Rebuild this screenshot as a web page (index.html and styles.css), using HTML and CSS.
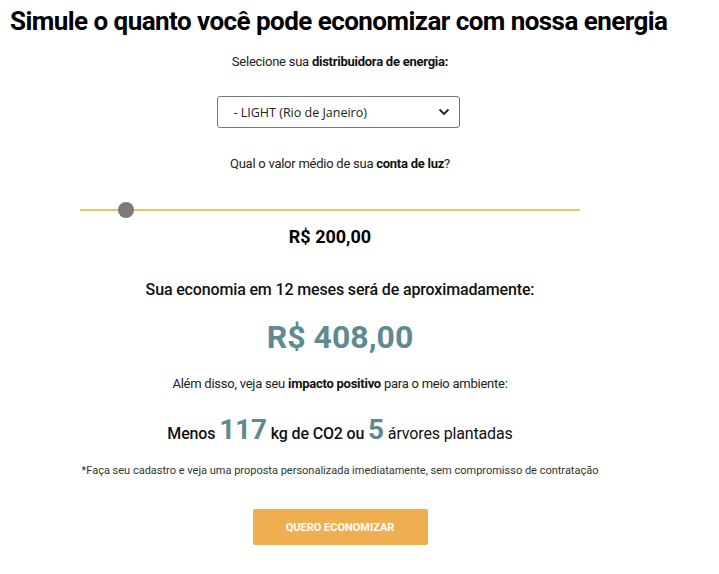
FILE: index.html
```html
<!DOCTYPE html>
<html lang="pt-BR">
<head>
<meta charset="utf-8">
<title>Simulador</title>
<link rel="stylesheet" href="styles.css">
</head>
<body>
<main class="sim">
  <h1 class="title">Simule o quanto você pode economizar com nossa energia</h1>
  <p class="label label-dist">Selecione sua <b>distribuidora de energia:</b></p>
  <div class="select-wrap">
    <div class="select">
      <span>- LIGHT (Rio de Janeiro)</span>
      <svg class="chev" width="12" height="8" viewBox="0 0 12 8"><path d="M1.5 1.5 L6 6 L10.5 1.5" fill="none" stroke="#222" stroke-width="1.8"/></svg>
    </div>
  </div>
  <p class="label label-luz">Qual o valor médio de sua <b>conta de luz</b>?</p>
  <div class="range">
    <div class="slider">
      <div class="track"></div>
      <div class="thumb"></div>
    </div>
    <p class="bill">R$ 200,00</p>
  </div>
  <p class="econ">Sua economia em 12 meses será de aproximadamente:</p>
  <p class="total">R$ 408,00</p>
  <p class="label label-amb">Além disso, veja seu <b>impacto positivo</b> para o meio ambiente:</p>
  <p class="impact">Menos <span class="num">117</span> kg de CO2 ou <span class="num">5</span> <span class="reg">árvores plantadas</span></p>
  <p class="note">*Faça seu cadastro e veja uma proposta personalizada imediatamente, sem compromisso de contratação</p>
  <div class="cta-wrap"><button class="cta">QUERO ECONOMIZAR</button></div>
</main>
</body>
</html>
```
FILE: styles.css
```css
* { box-sizing: border-box; }
body {
  margin: 0 8px;
  background: #fff;
  font-family: Roboto, "Liberation Sans", Arial, sans-serif;
  color: #111;
}
p { margin: 0; }
.sim {
  width: 664px;
  display: flex;
  flex-direction: column;
  align-items: center;
  text-align: center;
}
.title {
  align-self: flex-start;
  margin: 6px 0 0 2px;
  font-size: 26px;
  font-weight: 700;
  line-height: 30px;
  letter-spacing: -0.55px;
  white-space: nowrap;
  color: #000;
}
.label {
  font-size: 13px;
  line-height: 16px;
  letter-spacing: -0.25px;
  color: #222;
}
.label b { font-weight: 700; color: #111; }
.label-dist { margin-top: 18px; }
.select-wrap { margin: 26px 4px 0 0; }
.select {
  width: 243px;
  height: 32px;
  border: 1px solid #767676;
  border-radius: 3px;
  display: flex;
  align-items: center;
  justify-content: space-between;
  padding: 0 9px 0 16px;
  font-family: "Open Sans", "Noto Sans", sans-serif;
  font-size: 12.5px;
  color: #222;
}
.label-luz { margin-top: 28px; }
.range {
  align-self: flex-start;
  margin: 30px 0 0 72px;
  width: 500px;
  display: flex;
  flex-direction: column;
  align-items: center;
}
.slider {
  position: relative;
  width: 500px;
  height: 16px;
}
.track {
  position: absolute;
  left: 0; right: 0; top: 7px;
  height: 2px;
  background: #f5c05e;
}
.thumb {
  position: absolute;
  left: 38px;
  top: 0;
  width: 16px;
  height: 16px;
  border-radius: 50%;
  background: #7a7a7a;
}
.bill {
  margin-top: 8px;
  font-size: 18px;
  font-weight: 700;
  line-height: 22px;
  color: #000;
}
.econ {
  margin-top: 32px;
  font-size: 16px;
  font-weight: 500;
  line-height: 20px;
  letter-spacing: -0.15px;
  color: #111;
}
.total {
  margin-top: 18px;
  font-size: 32px;
  font-weight: 700;
  line-height: 38px;
  color: #5e8b8f;
}
.label-amb { margin-top: 20px; }
.impact {
  margin-top: 23px;
  font-size: 16px;
  font-weight: 500;
  line-height: 30px;
  letter-spacing: -0.15px;
  color: #111;
}
.impact .num {
  font-size: 28px;
  font-weight: 700;
  color: #5e8b8f;
}
.impact .reg { font-weight: 400; }
.note {
  margin-top: 15px;
  font-size: 11px;
  line-height: 14px;
  color: #333;
}
.cta-wrap { margin-top: 31px; }
.cta {
  width: 175px;
  height: 36px;
  border: none;
  border-radius: 2px;
  background: #efae50;
  color: #fff;
  font-family: Roboto, "Liberation Sans", sans-serif;
  font-size: 11px;
  font-weight: 700;
}
```
